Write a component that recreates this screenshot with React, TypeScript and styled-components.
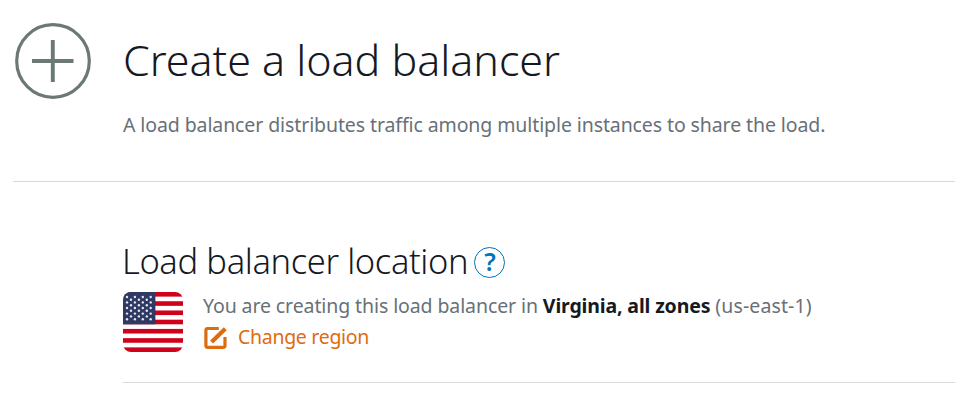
import React from "react";
import styled, { createGlobalStyle } from "styled-components";

const GlobalStyle = createGlobalStyle`
  * { box-sizing: border-box; }
  body {
    margin: 0;
    background: #ffffff;
    font-family: "Noto Sans", "Open Sans", sans-serif;
  }
`;

const Page = styled.main`
  height: 408px;
  padding-left: 13px;
  overflow: hidden;
  background: #ffffff;
`;

const Header = styled.header`
  display: flex;
  height: 182px;
  padding-top: 22px;
  border-bottom: 1px solid #d5d9d9;
`;

const PlusIcon = styled.svg`
  flex: none;
  width: 78px;
  height: 78px;
  margin: 0 31px 0 1px;
`;

const HeaderText = styled.div`
  flex: 1;
  min-width: 0;
`;

const Title = styled.h1`
  margin: 8px 0 0;
  height: 60px;
  font-size: 43px;
  font-weight: 300;
  line-height: 60px;
  letter-spacing: -0.02px;
  color: #16191f;
  white-space: nowrap;
`;

const Text = styled.p`
  margin: 0;
  font-size: 19.5px;
  line-height: 30px;
  letter-spacing: -0.1px;
  color: #687078;
  white-space: nowrap;
`;

const Description = styled(Text)`
  margin-top: 20px;
`;

const Section = styled.section`
  height: 201px;
  margin-left: 110px;
  padding-top: 56px;
  border-bottom: 1px solid #d5dbdb;
`;

const SectionHeading = styled.div`
  display: flex;
  align-items: center;
  height: 48px;
`;

const SectionTitle = styled.h2`
  margin: -3px 0 0 -1px;
  width: 352px;
  font-size: 34.5px;
  font-weight: 300;
  line-height: 48px;
  letter-spacing: -0.38px;
  color: #16191f;
  white-space: nowrap;
`;

const HelpButton = styled.button`
  flex: none;
  display: grid;
  place-items: center;
  width: 31px;
  height: 31px;
  padding: 0 0 3px 1px;
  border: 1.5px solid #0073bb;
  border-radius: 50%;
  background: none;
  font: 600 25px/26px "Noto Sans", sans-serif;
  color: #0073bb;
`;

const Location = styled.div`
  display: flex;
  gap: 20px;
  margin-top: 6px;
`;

const Flag = styled.svg`
  flex: none;
  width: 60px;
  height: 60px;
  border-radius: 8px;
`;

const Details = styled.div`
  margin-top: -1px;
`;

const Region = styled.strong`
  font-weight: 700;
  letter-spacing: -0.15px;
  color: #16191f;
`;

const RegionCode = styled.span`
  letter-spacing: 0.12px;
`;

const ChangeLink = styled.a`
  display: flex;
  align-items: center;
  gap: 9px;
  height: 31px;
  font-size: 19.5px;
  line-height: 30px;
  letter-spacing: -0.3px;
  color: #dd6b10;
  white-space: nowrap;
`;

const EditIcon = styled.svg`
  flex: none;
  width: 26px;
  height: 26px;
`;

const stars: [number, number][] = [5, 7.7, 10.4, 13.2, 16, 18.8, 21.6, 24.4, 27.2].flatMap(
  (y, row) =>
    (row % 2 ? [8, 15.9, 23.8] : [4, 11.9, 19.8, 27.7]).map((x): [number, number] => [x, y]),
);

export default function App() {
  return (
    <>
      <GlobalStyle />
      <Page>
        <Header>
          <PlusIcon viewBox="0 0 78 78" fill="none" stroke="#6b7876">
            <circle cx="39" cy="39" r="36.3" strokeWidth="3.2" />
            <path d="M18 39H59.5M38.8 18V60" strokeWidth="3.9" />
          </PlusIcon>
          <HeaderText>
            <Title>Create a load balancer</Title>
            <Description>
              A load balancer distributes traffic among multiple instances to share the load.
            </Description>
          </HeaderText>
        </Header>
        <Section>
          <SectionHeading>
            <SectionTitle>Load balancer location</SectionTitle>
            <HelpButton aria-label="Help">?</HelpButton>
          </SectionHeading>
          <Location>
            <Flag viewBox="0 0 60 60">
              <rect width="60" height="60" fill="#ffffff" />
              {[0, 2, 4, 6, 8, 10, 12].map((n) => (
                <rect key={n} y={(n * 60) / 13} width="60" height={60 / 13} fill="#d0021b" />
              ))}
              <rect width="32.4" height="32.3" fill="#2e3a64" />
              {stars.map(([x, y]) => (
                <circle key={`${x}-${y}`} cx={x} cy={y} r="1.2" fill="#e6e8ee" />
              ))}
            </Flag>
            <Details>
              <Text>
                You are creating this load balancer in <Region>Virginia, all zones</Region>{" "}
                <RegionCode>(us-east-1)</RegionCode>
              </Text>
              <ChangeLink>
                <EditIcon viewBox="0 0 26 26" fill="none" stroke="#dd6b10">
                  <path
                    d="M15.8 4.5H4.7Q2.9 4.5 2.9 6.3V21.6Q2.9 23.4 4.7 23.4H20.2Q22 23.4 22 21.6V13"
                    strokeWidth="3.2"
                  />
                  <path d="M8.6 18L22.3 4.8" strokeWidth="4.2" />
                </EditIcon>
                Change region
              </ChangeLink>
            </Details>
          </Location>
        </Section>
      </Page>
    </>
  );
}
